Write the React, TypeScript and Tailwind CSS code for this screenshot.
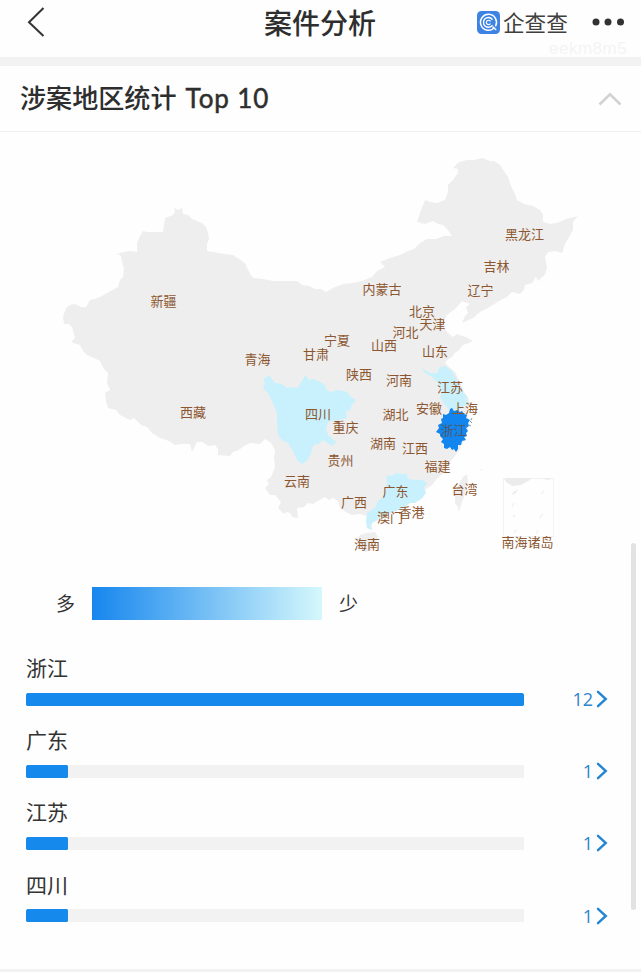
import React from 'react'

const MAINLAND =
  'M63 317L66 308L70 305L75 304L81 307L86 307L90 300L95 299L100 297L109 292L118 287L120 280L123 277L124 269L122 262L121 256L117 254L124 252L130 251L137 252L137 243L140 236L143 231L147 232L155 232L163 232L164 225L165 218L173 215L175 212L174 208L178 210L182 208L183 214L188 215L192 219L202 223L206 227L208 233L209 239L207 244L207 251L214 252L224 254L233 255L239 259L245 263L248 270L253 278L263 279L273 281L283 281L290 281L297 281L302 285L309 286L315 289L321 289L326 292L333 288L343 284L353 283L362 281L372 277L377 271L385 267L380 262L390 258L400 255L408 251L414 249L420 243L427 239L436 239L444 236L452 236L448 230L443 225L438 224L433 221L425 224L417 222L420 213L425 200L430 202L437 203L445 200L448 192L448 185L453 180L458 173L458 169L453 168L459 162L467 160L474 160L482 158L490 161L494 161L500 165L508 177L511 186L515 194L517 200L524 204L533 206L540 210L543 215L543 222L550 224L557 223L566 219L578 216L575 219L573 222L573 230L568 239L565 244L562 253L555 251L548 252L545 257L547 267L545 275L542 277L538 281L536 277L532 283L525 285L524 290L520 294L512 292L507 297L499 301L488 308L480 312L473 318L462 323L465 316L468 313L466 307L470 304L462 301L456 308L447 315L443 322L444 328L447 332L453 337L457 334L466 337L473 341L469 343L463 345L459 350L455 353L452 357L447 360L445 363L449 367L455 372L460 382L464 392L468 397L470 403L467 410L469 423L465 440L458 452L450 462L443 473L436 480L432 485L425 490L423 498L412 502L405 507L398 510L390 514L383 518L372 523L372 530L367 527L367 516L360 514L352 515L346 512L340 508L338 501L333 498L329 500L325 497L318 501L313 504L308 503L304 507L297 508L298 518L292 517L290 513L287 512L284 514L278 508L281 502L275 495L270 495L265 488L269 484L267 480L271 477L275 467L274 458L275 450L271 443L265 439L260 444L250 443L244 446L239 450L233 452L230 456L218 455L218 449L215 445L208 446L203 442L197 442L195 446L192 452L190 444L182 444L175 445L169 441L160 438L152 433L147 427L141 425L134 418L130 420L120 415L116 410L108 408L106 401L105 393L110 390L107 383L108 373L104 369L100 361L94 358L87 355L83 351L80 345L71 342L75 338L72 327L69 324L64 324Z'

const SICHUAN =
  'M263 377L266 378L269 375L275 383L282 384L287 388L292 387L298 388L301 382L303 380L305 375L309 380L313 379L318 381L325 385L326 389L330 392L338 390L347 392L351 397L356 400L352 405L350 410L346 412L347 418L338 420L328 422L326 429L328 435L336 442L332 446L323 440L319 444L313 445L311 453L308 460L302 464L297 460L293 451L288 443L282 440L278 435L277 424L277 413L273 403L268 393L263 388L265 383Z'

const JIANGSU =
  'M422 368L430 373L437 373L440 367L445 366L452 371L457 380L461 389L467 397L466 400L469 404L464 406L460 409L450 410L445 405L440 397L442 391L438 383L432 377L425 373Z'

const GUANGDONG =
  'M387 475L392 476L396 473L402 474L407 474L408 479L415 480L422 480L427 483L424 488L426 493L421 499L415 503L409 503L403 508L390 513L383 515L378 519L372 523L370 526L372 530L367 528L366 521L367 513L375 508L378 501L383 497L386 490Z'

const ZHEJIANG =
  'M450 409L452 408L454 411L457 410L460 412L462 411L464 414L467 415L466 418L470 420L468 423L469 426L466 428L468 431L466 433L467 436L464 437L466 440L462 441L461 445L458 445L458 449L456 452L454 449L452 450L450 447L447 449L444 448L444 444L441 442L443 439L440 436L440 434L436 432L439 428L438 425L442 423L441 419L443 418L443 414L446 415L449 413Z'

const provinces = [
  { name: '黑龙江', x: 524.5, y: 235 },
  { name: '吉林', x: 496.5, y: 267 },
  { name: '辽宁', x: 480.5, y: 291 },
  { name: '内蒙古', x: 382, y: 290 },
  { name: '新疆', x: 163.5, y: 301.5 },
  { name: '北京', x: 422, y: 311.5 },
  { name: '天津', x: 432.5, y: 325 },
  { name: '河北', x: 405.5, y: 332.5 },
  { name: '宁夏', x: 337, y: 341 },
  { name: '山西', x: 384, y: 346 },
  { name: '山东', x: 435, y: 352 },
  { name: '甘肃', x: 316, y: 354.5 },
  { name: '青海', x: 257.5, y: 359.5 },
  { name: '陕西', x: 359, y: 374.5 },
  { name: '河南', x: 399, y: 380.5 },
  { name: '江苏', x: 450, y: 388 },
  { name: '西藏', x: 193, y: 413 },
  { name: '四川', x: 318, y: 415 },
  { name: '湖北', x: 395.5, y: 415 },
  { name: '安徽', x: 429, y: 408.5 },
  { name: '上海', x: 465, y: 408.5 },
  { name: '重庆', x: 345.5, y: 427.5 },
  { name: '浙江', x: 453.5, y: 430.5 },
  { name: '湖南', x: 383, y: 443.5 },
  { name: '江西', x: 415, y: 448.5 },
  { name: '贵州', x: 340.5, y: 460.5 },
  { name: '福建', x: 437.5, y: 466.5 },
  { name: '云南', x: 297, y: 481.5 },
  { name: '广东', x: 395.5, y: 491.5 },
  { name: '台湾', x: 464.5, y: 489.5 },
  { name: '广西', x: 354, y: 502.5 },
  { name: '香港', x: 411.5, y: 512.5 },
  { name: '澳门', x: 390, y: 517.5 },
  { name: '海南', x: 367, y: 544.5 },
  { name: '南海诸岛', x: 527.5, y: 542.5 },
]

const regions = [
  { name: '浙江', count: 12 },
  { name: '广东', count: 1 },
  { name: '江苏', count: 1 },
  { name: '四川', count: 1 },
]

const maxCount = 12

const Header = () => (
  <header className="relative flex h-[57px] shrink-0 items-start">
    <svg className="ml-[26px] mt-[6px]" width="20" height="32" viewBox="0 0 20 32" fill="none" stroke="#333" strokeWidth="2">
      <path d="M17.5 2L3 16.2L17.5 30" />
    </svg>
    <h1 className="absolute left-[264px] top-[2px] text-[28px] leading-[40px] font-medium text-[#2e2e2e]">案件分析</h1>
    <div className="ml-auto flex items-center pt-[6px] pr-[16px]">
      <svg width="23" height="23" viewBox="0 0 23 23" fill="none">
        <rect width="23" height="23" rx="4.5" fill="#3d83e3" />
        <g stroke="#fff" strokeLinecap="round">
          <path d="M16.8 17.3A8 8 0 1 1 18.7 14.8" strokeWidth="1.5" />
          <path d="M16 16L18.7 18.5" strokeWidth="1.6" />
          <path d="M15.1 8.2A4.9 4.9 0 1 0 15.1 14.6" strokeWidth="1.4" />
          <path d="M13.2 10A2.2 2.2 0 1 0 13.2 12.9" strokeWidth="1.2" />
        </g>
      </svg>
      <span className="ml-[3px] w-[65px] text-[21.6px] leading-[32px] whitespace-nowrap text-[#404040]">企查查</span>
      <svg className="ml-[23px]" width="34" height="8" viewBox="0 0 34 8" fill="#333">
        <circle cx="5" cy="4" r="3.5" />
        <circle cx="17" cy="4" r="3.5" />
        <circle cx="29.5" cy="4" r="3.5" />
      </svg>
    </div>
    <span className="absolute left-[549px] top-[39px] font-['Liberation_Sans',sans-serif] text-[17px] leading-[20px] tracking-[0.5px] text-[#f4f4f4]">eekm8m5</span>
  </header>
)

const ChinaMap = () => (
  <svg className="block shrink-0" width="641" height="428" viewBox="0 132 641 428">
    <g fill="#eee">
      <path d={MAINLAND} />
      <path d="M467 474L463 477L459 484L455 493L455 503L458 507L459 512L461 505L464 497L466 489L468 482Z" />
      <path d="M360 535L367 533L375 532L378 537L375 544L372 550L365 552L358 547L357 541Z" />
      <rect x="481" y="469" width="1" height="2" />
    </g>
    <g fill="#c8f1fd">
      <path d={SICHUAN} />
      <path d={JIANGSU} />
      <path d={GUANGDONG} />
    </g>
    <path d={ZHEJIANG} fill="#1285ee" />
    <path d="M470 421L472 423M469 425L471 426M472 418L471 420" stroke="#557f91" strokeWidth="0.8" />

    <rect x="503.5" y="478.5" width="50" height="58" fill="none" stroke="#f3f3f3" />
    <g fill="#ececec">
      <path d="M504 478H533L528 481L521 485L512 486L506 482Z" />
      <path d="M542 479L552 478L549 480Z" />
      <path d="M513 492L518 489L516 493L512 495Z" />
    </g>
    <path d="M541 494L544 491M512 507L514 503M539 518L543 514M513 517L515 515M536 534L538 530M514 533L517 530" stroke="#f1f1f1" strokeWidth="1.4" />

    <g fill="#8c5730" fontSize="13" textAnchor="middle">
      {provinces.map((p) => (
        <text key={p.name} x={p.x} y={p.y + 4.2} fill={p.name === '浙江' ? '#4c5a6b' : undefined}>
          {p.name}
        </text>
      ))}
    </g>
  </svg>
)

const App = () => {
  return (
    <div className="relative flex h-[972px] w-[641px] flex-col overflow-hidden bg-[#fefefe] font-['Noto_Sans_CJK_SC',sans-serif] text-[#333]">
      <Header />
      <div className="h-[9px] shrink-0 bg-[#f2f2f2]" />

      <div className="flex h-[66px] shrink-0 items-center justify-between border-b border-[#f0f0f0] pl-[20px] pr-[19px]">
        <h2 className="pb-px text-[26.1px] font-medium text-[#2e2e2e]">
          涉案地区统计
          <span className="ml-[9px] font-['Lato',sans-serif] text-[26px] font-normal tracking-[0.9px] [-webkit-text-stroke:0.5px_#2e2e2e]">Top 10</span>
        </h2>
        <svg width="24" height="14" viewBox="0 0 24 14" fill="none" stroke="#d2d2d2" strokeWidth="2.6">
          <path d="M1.5 12.5L12 2.2L22.5 12.5" />
        </svg>
      </div>

      <ChinaMap />

      <div className="mt-[27px] flex h-[33px] shrink-0 items-center pl-[56px] text-[19px]">
        <span className="pb-px">多</span>
        <div className="mx-[17px] h-[33px] w-[230px] bg-[linear-gradient(90deg,#1686ee,#d5f8fc)]" />
        <span className="pb-px">少</span>
      </div>

      <ul className="mt-[31px]">
        {regions.map((r) => (
          <li key={r.name} className="h-[72.2px] pl-[26px]">
            <div className="h-[32px] text-[21px] leading-[32px]">{r.name}</div>
            <div className="mt-[3px] flex h-[26px] items-center">
              <div className="h-[13px] w-[498px] overflow-hidden rounded-[1.5px] bg-[#f2f2f2]">
                <div className="h-full rounded-[1.5px] bg-[#168aec]" style={{ width: `${(r.count / maxCount) * 100}%` }} />
              </div>
              <span className="w-[69px] text-right font-['Open_Sans',sans-serif] text-[18px] leading-[26px] text-[#2f85cb]">{r.count}</span>
              <svg className="ml-[3px]" width="12" height="18" viewBox="0 0 12 18" fill="none" stroke="#2485d3" strokeWidth="2.4" strokeLinecap="round">
                <path d="M2 1.8L9.8 9L2 16.2" />
              </svg>
            </div>
          </li>
        ))}
      </ul>

      <div className="mt-auto h-[3px] shrink-0 bg-[#f2f2f2]" />
      <div className="absolute left-[631px] top-[543px] h-[367px] w-[5px] rounded-full bg-[#e2e2e2]" />
    </div>
  )
}

export default App
